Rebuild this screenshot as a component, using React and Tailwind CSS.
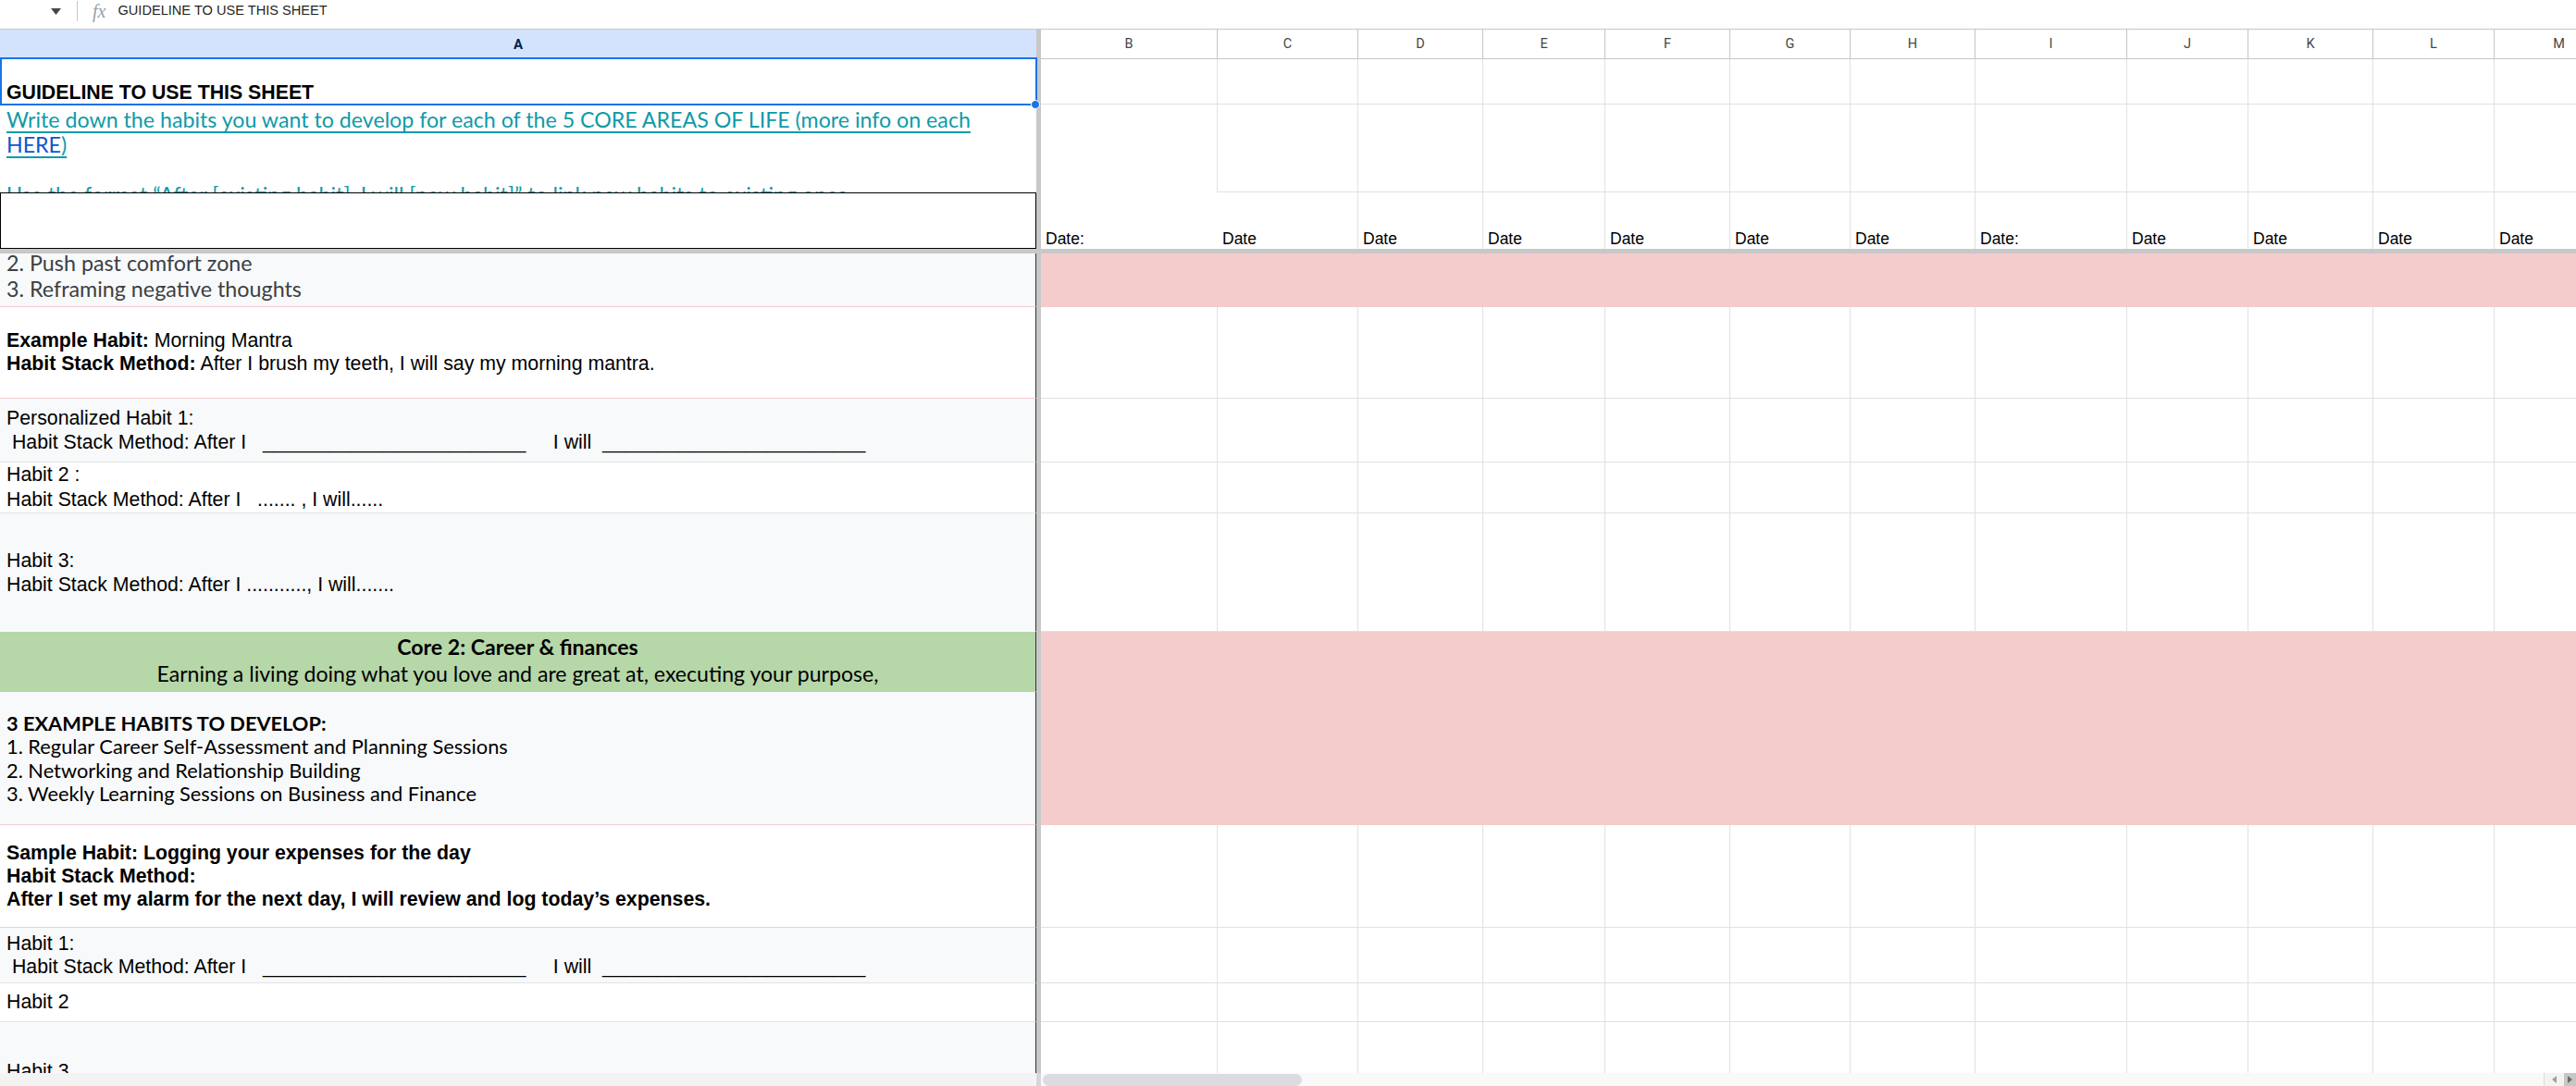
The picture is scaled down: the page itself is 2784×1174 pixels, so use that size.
import React from 'react';

const COLS = [
  { key: 'B', w: 'w-[191px]', date: 'Date:' },
  { key: 'C', w: 'w-[152px]', date: 'Date' },
  { key: 'D', w: 'w-[135px]', date: 'Date' },
  { key: 'E', w: 'w-[132px]', date: 'Date' },
  { key: 'F', w: 'w-[135px]', date: 'Date' },
  { key: 'G', w: 'w-[130px]', date: 'Date' },
  { key: 'H', w: 'w-[135px]', date: 'Date' },
  { key: 'I', w: 'w-[164px]', date: 'Date:' },
  { key: 'J', w: 'w-[131px]', date: 'Date' },
  { key: 'K', w: 'w-[135px]', date: 'Date' },
  { key: 'L', w: 'w-[131px]', date: 'Date' },
  { key: 'M', w: 'w-[140px]', date: 'Date' },
];

const arial = "font-['Liberation_Sans',Arial,sans-serif]";
const geo = "font-['Lato','Noto_Sans',sans-serif]";

// scrolled rows: height + whether the right side is a pink band
const ROWS = [
  { h: 'h-[58px]', pink: true },
  { h: 'h-[99px]' },
  { h: 'h-[69px]' },
  { h: 'h-[55px]' },
  { h: 'h-[128px]' },
  { h: 'h-[65px]', pink: true },
  { h: 'h-[144px]', pink: true },
  { h: 'h-[111px]' },
  { h: 'h-[60px]' },
  { h: 'h-[42px]' },
  { h: 'h-[108px]' },
];

const Blank = ' Habit Stack Method: After I   ________________________     I will  ________________________';

function FreezeBar() {
  return <div className="w-[5px] shrink-0 self-stretch bg-[#c8c8c8]" />;
}

function GridCells({ h, row }) {
  return (
    <div className={`flex shrink-0 ${h}`}>
      {COLS.map((c) => {
        const noBottom = row === 2 && c.key === 'B';
        return (
          <div
            key={c.key}
            className={`${c.w} shrink-0 h-full border-r border-[#e1e1e1] ${noBottom ? '' : 'border-b'}`}
          />
        );
      })}
    </div>
  );
}

function ACell({ h, bg = 'bg-white', line = 'border-[#e2e3e3]', className = '', children }) {
  return (
    <div className={`${h} w-[1120px] shrink-0 overflow-hidden border-b border-r border-r-[#26372e] ${line} ${bg} ${className}`}>
      {children}
    </div>
  );
}

export default function App() {
  return (
    <div className="w-[2784px] h-[1174px] overflow-hidden bg-white flex flex-col text-black">
      {/* formula bar */}
      <div className="h-[32px] shrink-0 border-b border-[#c4c7c5] flex items-start">
        <div className="h-[24px] flex items-center">
          <svg className="ml-[55px]" width="11" height="7" viewBox="0 0 11 7">
            <path d="M0 0h11L5.5 7z" fill="#444746" />
          </svg>
          <div className="ml-[17px] w-px h-[22px] bg-[#c4c7c5]" />
          <span className="ml-[16px] font-['Liberation_Serif',serif] italic text-[20px] text-[#9aa0a6] leading-none">fx</span>
          <span className={`ml-[13px] ${arial} text-[14.6px] text-[#1f1f1f]`}>GUIDELINE TO USE THIS SHEET</span>
        </div>
      </div>

      {/* column headers */}
      <div className="h-[32px] shrink-0 flex">
        <div className="w-[1120px] shrink-0 bg-[#d3e3fd] flex items-center justify-center font-['Roboto',sans-serif] font-bold text-[15px] text-[#041e49]">
          A
        </div>
        <FreezeBar />
        {COLS.map((c) => (
          <div
            key={c.key}
            className={`${c.w} shrink-0 border-r border-b border-[#c4c7c5] flex items-center justify-center font-['Roboto',sans-serif] text-[14.5px] text-[#444746]`}
          >
            {c.key}
          </div>
        ))}
      </div>

      {/* frozen rows */}
      <div className="flex shrink-0">
        <div className="w-[1120px] shrink-0 relative">
          <div className={`h-[49px] flex items-end pl-[7px] pb-[1px] ${arial} font-bold text-[21.3px] leading-[24px]`}>
            GUIDELINE TO USE THIS SHEET
          </div>
          <div className={`h-[95px] overflow-hidden pl-[7px] pt-[3px] ${geo} text-[23.2px] leading-[27px] whitespace-nowrap`}>
            <div className="text-[#0f9aa8] underline underline-offset-[4px] decoration-[1.5px]">
              Write down the habits you want to develop for each of the 5 CORE AREAS OF LIFE (more info on each
            </div>
            <div className="text-[#0f9aa8] underline underline-offset-[4px] decoration-[1.5px]">
              <span className="text-[#1155cc]">HERE</span>)
            </div>
            <div>&nbsp;</div>
            <div className="text-[#0f9aa8] underline underline-offset-[4px] decoration-[1.5px]">
              Use the format “After [existing habit], I will [new habit]” to link new habits to existing ones
            </div>
          </div>
          <div className="h-[61px] border-[1.5px] border-black" />
          {/* selection */}
          <div className="absolute left-0 top-[-2px] w-[1121px] h-[52px] border-2 border-[#1a73e8] pointer-events-none" />
          <div className="absolute left-[1114px] top-[44px] w-[10px] h-[10px] rounded-full bg-[#1a73e8] border border-white" />
        </div>
        <FreezeBar />
        <div className="flex flex-col">
          <GridCells h="h-[49px]" row={1} />
          <GridCells h="h-[95px]" row={2} />
          <div className="flex shrink-0 h-[61px]">
            {COLS.map((c) => (
              <div
                key={c.key}
                className={`${c.w} shrink-0 h-full border-[#e1e1e1] ${c.key === 'B' ? '' : 'border-r'} flex items-end pl-[5px] pb-[1px] ${arial} text-[17.5px] leading-[20px]`}
              >
                {c.date}
              </div>
            ))}
          </div>
        </div>
      </div>

      <div className="h-[5px] shrink-0 bg-[#c8c8c8]" />

      {/* scrolled area */}
      <div className="h-[886px] shrink-0 overflow-hidden flex">
        <div className="w-[1120px] shrink-0 flex flex-col">
          <ACell h="h-[58px]" bg="bg-[#f8f9fa]" line="border-b-[#f3cdd0]" className={`flex flex-col justify-end pl-[7px] pb-[5px] ${geo} text-[23.3px] leading-[28px] text-[#3c4043]`}>
            <div>2. Push past comfort zone</div>
            <div>3. Reframing negative thoughts</div>
          </ACell>
          <ACell h="h-[99px]" line="border-b-[#f3cdd0]" className={`flex flex-col justify-center pl-[7px] ${arial} text-[21.3px] leading-[25px]`}>
            <div><b>Example Habit:</b> Morning Mantra</div>
            <div><b>Habit Stack Method:</b> After I brush my teeth, I will say my morning mantra.</div>
          </ACell>
          <ACell h="h-[69px]" bg="bg-[#f8f9fa]" className={`flex flex-col justify-center pl-[7px] ${arial} text-[21.3px] leading-[26px] whitespace-pre`}>
            <div>Personalized Habit 1:</div>
            <div>{Blank}</div>
          </ACell>
          <ACell h="h-[55px]" className={`flex flex-col justify-center pl-[7px] ${arial} text-[21.3px] leading-[27px] whitespace-pre`}>
            <div>Habit 2 :</div>
            <div>Habit Stack Method: After I   ....... , I will......</div>
          </ACell>
          <ACell h="h-[128px]" bg="bg-[#f8f9fa]" line="border-b-[#f8f9fa]" className={`flex flex-col justify-center pl-[7px] ${arial} text-[21.3px] leading-[26px] whitespace-pre`}>
            <div>Habit 3:</div>
            <div>Habit Stack Method: After I ..........., I will.......</div>
          </ACell>
          <ACell h="h-[65px]" bg="bg-[#b6d7a8]" line="border-b-[#b6d7a8]" className={`pt-[2px] text-center ${geo} text-[23.1px] leading-[29px] whitespace-nowrap`}>
            <div className="font-bold">Core 2: Career &amp; finances</div>
            <div>Earning a living doing what you love and are great at, executing your purpose,</div>
            <div>and building the financial security to support the life you want.</div>
          </ACell>
          <ACell h="h-[144px]" bg="bg-[#f8f9fa]" line="border-b-[#f3cdd0]" className={`flex flex-col justify-center pl-[7px] ${geo} text-[21.8px] leading-[25.5px]`}>
            <div className="font-bold">3 EXAMPLE HABITS TO DEVELOP:</div>
            <div>1. Regular Career Self-Assessment and Planning Sessions</div>
            <div>2. Networking and Relationship Building</div>
            <div>3. Weekly Learning Sessions on Business and Finance</div>
          </ACell>
          <ACell h="h-[111px]" line="border-b-[#f3cdd0]" className={`flex flex-col justify-center pl-[7px] ${arial} font-bold text-[21.3px] leading-[25px]`}>
            <div>Sample Habit: Logging your expenses for the day</div>
            <div>Habit Stack Method:</div>
            <div>After I set my alarm for the next day, I will review and log today’s expenses.</div>
          </ACell>
          <ACell h="h-[60px]" bg="bg-[#f8f9fa]" className={`flex flex-col justify-center pl-[7px] ${arial} text-[21.3px] leading-[25px] whitespace-pre`}>
            <div>Habit 1:</div>
            <div>{Blank}</div>
          </ACell>
          <ACell h="h-[42px]" className={`flex flex-col justify-center pl-[7px] ${arial} text-[21.3px] leading-[25px]`}>
            <div>Habit 2</div>
          </ACell>
          <ACell h="h-[108px]" bg="bg-[#f8f9fa]" line="border-b-[#f8f9fa]" className={`flex flex-col justify-center pl-[7px] ${arial} text-[21.3px] leading-[25px]`}>
            <div>Habit 3</div>
          </ACell>
        </div>
        <FreezeBar />
        <div className="flex flex-col">
          {ROWS.map((r, i) =>
            r.pink ? (
              <div key={i} className={`${r.h} shrink-0 w-[1700px] bg-[#f4cccc]`} />
            ) : (
              <GridCells key={i} h={r.h} row={0} />
            )
          )}
        </div>
      </div>

      {/* horizontal scrollbar */}
      <div className="h-[14px] shrink-0 flex">
        <div className="w-[1120px] shrink-0 bg-[#f3f3f3]" />
        <div className="w-[5px] shrink-0 bg-[#d4d7dc]" />
        <div className="flex-1 bg-[#f9f9f9] flex items-start pl-[2px]">
          <div className="w-[280px] h-[13px] mt-[1px] rounded-full bg-[#dadce0]" />
        </div>
        <div className="w-[22px] shrink-0 bg-[#f3f3f3] border-l border-[#dadada] flex items-center justify-center">
          <svg width="5" height="8" viewBox="0 0 5 8"><path d="M5 0v8L0 4z" fill="#9e9e9e" /></svg>
        </div>
        <div className="w-[13px] shrink-0 bg-[#c6c6c6] flex items-center justify-center">
          <svg width="5" height="8" viewBox="0 0 5 8"><path d="M0 0v8l5-4z" fill="#6b6b6b" /></svg>
        </div>
      </div>
    </div>
  );
}
